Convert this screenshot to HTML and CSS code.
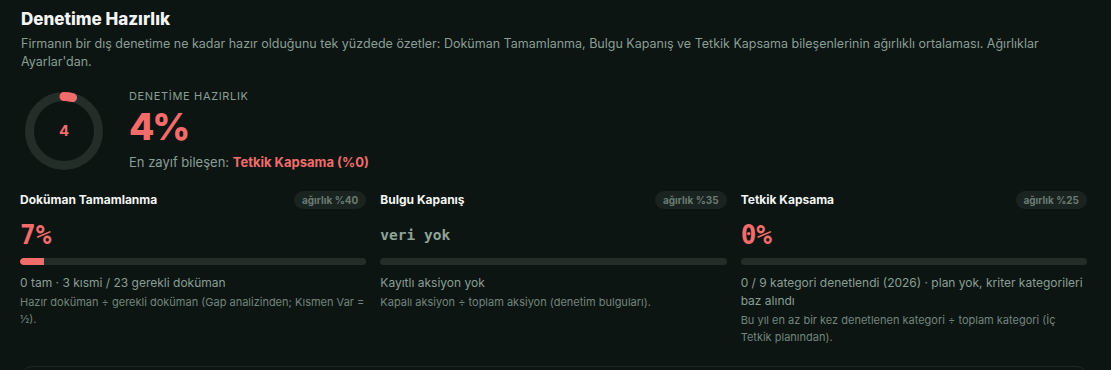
FILE: index.html
```html
<!DOCTYPE html>
<html lang="tr">

<head>
    <meta charset="UTF-8">
    <meta name="viewport" content="width=device-width, initial-scale=1.0">
    <title>Denetime Hazırlık</title>
    <link rel="stylesheet" href="styles.css">
</head>

<body>
    <div class="panel">
        <h2 class="title">Denetime Hazırlık</h2>
        <p class="desc">Firmanın bir dış denetime ne kadar hazır olduğunu tek yüzdede özetler: Doküman Tamamlanma, Bulgu Kapanış ve Tetkik Kapsama bileşenlerinin ağırlıklı ortalaması. Ağırlıklar Ayarlar'dan.</p>

        <div class="summary">
            <div class="ring">
                <svg width="80" height="80" viewBox="0 0 80 80">
                    <circle cx="40" cy="40" r="34.5" fill="none" stroke="#232e29" stroke-width="9" />
                    <circle cx="40" cy="40" r="34.5" fill="none" stroke="#f36c6c" stroke-width="9" stroke-linecap="round" stroke-dasharray="8.7 300" transform="rotate(-90 40 40)" />
                </svg>
                <span class="ring-num">4</span>
            </div>
            <div class="score">
                <div class="score-label">DENETİME HAZIRLIK</div>
                <div class="score-value">4%</div>
                <div class="score-weak">En zayıf bileşen: <b>Tetkik Kapsama (%0)</b></div>
            </div>
        </div>

        <div class="cols">
            <div class="col">
                <div class="col-head">
                    <span class="col-title">Doküman Tamamlanma</span>
                    <span class="badge">ağırlık %40</span>
                </div>
                <div class="val">7%</div>
                <div class="bar"><div class="fill" style="width: 7%"></div></div>
                <div class="info">0 tam · 3 kısmi / 23 gerekli doküman</div>
                <div class="note">Hazır doküman ÷ gerekli doküman (Gap analizinden; Kısmen Var = ½).</div>
            </div>
            <div class="col">
                <div class="col-head">
                    <span class="col-title">Bulgu Kapanış</span>
                    <span class="badge">ağırlık %35</span>
                </div>
                <div class="val empty">veri yok</div>
                <div class="bar"></div>
                <div class="info">Kayıtlı aksiyon yok</div>
                <div class="note">Kapalı aksiyon ÷ toplam aksiyon (denetim bulguları).</div>
            </div>
            <div class="col">
                <div class="col-head">
                    <span class="col-title">Tetkik Kapsama</span>
                    <span class="badge">ağırlık %25</span>
                </div>
                <div class="val">0%</div>
                <div class="bar"><div class="fill" style="width: 0%"></div></div>
                <div class="info">0 / 9 kategori denetlendi (2026) · plan yok, kriter kategorileri baz alındı</div>
                <div class="note">Bu yıl en az bir kez denetlenen kategori ÷ toplam kategori (İç Tetkik planından).</div>
            </div>
        </div>

        <div class="next-card"></div>
    </div>
</body>

</html>
```

FILE: styles.css
```css
* {
    box-sizing: border-box;
}

body {
    margin: 0;
    background: #0c1512;
    font-family: Inter, "Noto Sans", sans-serif;
    color: #e9eeeb;
    overflow: hidden;
}

.panel {
    padding: 8px 24px 0 20px;
}

.title {
    margin: 0 0 0 1px;
    font-size: 17px;
    font-weight: 800;
    line-height: 22px;
    color: #f2f4f3;
}

.desc {
    margin: 5px 0 0 1px;
    font-size: 12.5px;
    line-height: 17.5px;
    color: #8a9e95;
}

.summary {
    display: flex;
    align-items: flex-start;
    margin-top: 21px;
    padding-left: 4px;
}

.ring {
    position: relative;
    width: 80px;
    height: 80px;
    flex: none;
}

.ring svg {
    display: block;
}

.ring-num {
    position: absolute;
    left: 0;
    top: 0;
    width: 80px;
    line-height: 80px;
    text-align: center;
    font-size: 15px;
    font-weight: 700;
    color: #f36c6c;
}

.score {
    margin-left: 25px;
    margin-top: -2px;
}

.score-label {
    font-size: 11px;
    letter-spacing: 0.06em;
    line-height: 14px;
    color: #8a9e95;
}

.score-value {
    font-size: 37px;
    font-weight: 800;
    letter-spacing: -0.06em;
    line-height: 46px;
    color: #f36c6c;
    margin-top: 1px;
}

.score-weak {
    margin-top: 3px;
    font-size: 13px;
    line-height: 18px;
    color: #8a9e95;
}

.score-weak b {
    color: #f36c6c;
}

.cols {
    display: grid;
    grid-template-columns: 1fr 1fr 1fr;
    gap: 14px;
    margin-top: 19px;
}

.col-head {
    display: flex;
    justify-content: space-between;
    align-items: center;
    height: 19px;
}

.col-title {
    font-size: 12px;
    font-weight: 700;
    color: #f2f4f3;
}

.badge {
    background: #19231f;
    border-radius: 9px;
    padding: 0 8px;
    font-size: 10px;
    font-weight: 700;
    line-height: 18px;
    color: #6b7b74;
}

.val {
    margin-top: 10px;
    height: 32px;
    font-family: "DejaVu Sans Mono", monospace;
    font-size: 26px;
    font-weight: 700;
    line-height: 32px;
    color: #f36c6c;
}

.val.empty {
    font-size: 14.5px;
    color: #8fa399;
}

.bar {
    margin-top: 7px;
    height: 7px;
    border-radius: 4px;
    background: #232e29;
    overflow: hidden;
}

.fill {
    height: 100%;
    background: #f36c6c;
    border-radius: 4px 0 0 4px;
}

.info {
    margin-top: 9px;
    font-size: 12px;
    line-height: 18px;
    color: #8a9e95;
}

.note {
    margin-top: 2px;
    font-size: 11px;
    line-height: 17px;
    color: #74847d;
}

.next-card {
    margin-top: 20px;
    height: 40px;
    border: 1px solid #1e2924;
    border-radius: 10px;
    margin-left: 2px;
    margin-right: 0;
}
```
